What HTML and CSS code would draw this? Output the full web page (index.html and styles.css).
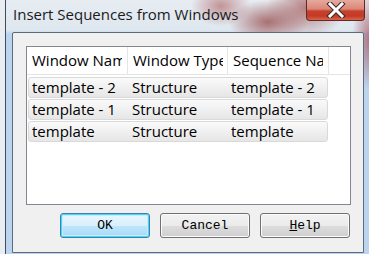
FILE: index.html
```html
<!DOCTYPE html>
<html>
<head>
<meta charset="utf-8">
<link rel="stylesheet" href="styles.css">
</head>
<body>
<div class="win">
  <div class="titlebar">
    <span class="title">Insert Sequences from Windows</span>
    <div class="close">
      <svg width="20" height="16" viewBox="0 0 20 16">
        <path d="M4 2 L16 14 M16 2 L4 14" stroke="#3a2a2a" stroke-width="5" stroke-linecap="square" fill="none"/>
        <path d="M4 2 L16 14 M16 2 L4 14" stroke="#ffffff" stroke-width="3" stroke-linecap="square" fill="none"/>
      </svg>
    </div>
  </div>
  <div class="client">
    <div class="list">
      <div class="hdr">
        <div class="hc c1"><span class="ht">Window Name</span></div>
        <div class="hc c2"><span class="ht">Window Type</span></div>
        <div class="hc c3"><span class="ht">Sequence Name</span></div>
        <div class="hfill"></div>
      </div>
      <div class="row"><div class="c c1">template - 2</div><div class="c c2">Structure</div><div class="c c3">template - 2</div></div>
      <div class="row"><div class="c c1">template - 1</div><div class="c c2">Structure</div><div class="c c3">template - 1</div></div>
      <div class="row"><div class="c c1">template</div><div class="c c2">Structure</div><div class="c c3">template</div></div>
    </div>
    <div class="buttons">
      <button class="btn def">OK</button>
      <button class="btn">Cancel</button>
      <button class="btn"><u>H</u>elp</button>
    </div>
  </div>
</div>
</body>
</html>
```

FILE: styles.css
```css
html, body {
  margin: 0;
  padding: 0;
}
body {
  width: 369px;
  height: 254px;
  overflow: hidden;
  background: #e9edf1;
  font-family: "Open Sans", "Noto Sans", sans-serif;
}
.win {
  margin-left: 5px;
  height: 254px;
  border-left: 1px solid #3d4c5c;
  padding-left: 6px;
  background:
    radial-gradient(ellipse 40px 22px at 262px 22px, rgba(150,70,70,0.75), rgba(150,70,70,0) 100%),
    radial-gradient(ellipse 30px 20px at 215px 6px, rgba(170,90,90,0.6), rgba(170,90,90,0) 100%),
    radial-gradient(ellipse 40px 30px at 300px 8px, rgba(160,80,80,0.7), rgba(160,80,80,0) 100%),
    radial-gradient(ellipse 18px 50px at 364px 40px, rgba(170,90,100,0.8), rgba(170,90,100,0) 100%),
    linear-gradient(to bottom, #e6ecf2 0px, #dfe7ef 30px, #bcd4ee 34px, #bcd4ee 254px);
}
.titlebar {
  height: 32px;
  display: flex;
  align-items: flex-start;
}
.title {
  margin-left: 1px;
  margin-top: 4px;
  font-size: 15px;
  color: #1a1a1a;
  white-space: nowrap;
}
.close {
  margin-left: auto;
  margin-right: 4px;
  width: 57px;
  height: 20px;
  border: 1px solid #5c2a2a;
  border-top: none;
  border-radius: 0 0 4px 4px;
  background: linear-gradient(to bottom, #e6a99c 0%, #d9877a 45%, #c8412e 55%, #c33a25 80%, #d8664e 100%);
  display: flex;
  align-items: center;
  justify-content: center;
}
.client {
  box-sizing: border-box;
  width: 352px;
  height: 221px;
  border: 1px solid #5b6b7c;
  border-radius: 2px 2px 0 0;
  background: #f0f0f0;
  padding: 13px 11px 0 13px;
}
.list {
  box-sizing: border-box;
  width: 325px;
  height: 159px;
  border: 1px solid #828790;
  background: #ffffff;
}
.hdr {
  display: flex;
  height: 27px;
  border-bottom: 1px solid #e5e5e5;
  margin-bottom: 2px;
}
.hc {
  box-sizing: border-box;
  font-size: 15px;
  line-height: 26px;
  padding-left: 5px;
  border-right: 1px solid #e5e5e5;
  color: #000;
}
.ht {
  display: block;
  width: 90px;
  white-space: nowrap;
  overflow: hidden;
}
.hdr .c1 { width: 101px; }
.hdr .c2 { width: 100px; }
.hdr .c3 { width: 101px; }
.hfill { flex: 1; }
.row {
  box-sizing: border-box;
  display: flex;
  margin-left: 1px;
  width: 300px;
  height: 21px;
  margin-bottom: 1px;
  border: 1px solid #d9d9d9;
  border-radius: 3px;
  background: linear-gradient(to bottom, #fafafa 0%, #f0f0f0 50%, #e6e6e6 100%);
}
.c {
  box-sizing: border-box;
  font-size: 15px;
  line-height: 19px;
  padding-left: 3px;
  white-space: nowrap;
  overflow: hidden;
  color: #000;
}
.row .c1 { width: 100px; }
.row .c2 { width: 99px; }
.row .c3 { width: 99px; }
.buttons {
  display: flex;
  justify-content: flex-end;
  gap: 10px;
  margin-top: 8px;
  padding-right: 2px;
}
.btn {
  box-sizing: border-box;
  width: 90px;
  height: 25px;
  border: 1px solid #707070;
  border-radius: 3px;
  background: linear-gradient(to bottom, #f2f2f2 0%, #ebebeb 50%, #dddddd 51%, #cfcfcf 100%);
  font-family: "Liberation Mono", monospace;
  font-size: 13px;
  color: #000;
  padding: 0;
  box-shadow: inset 0 0 0 1px #fcfcfc;
}
.btn.def {
  border-color: #3c7fb1;
  background: linear-gradient(to bottom, #eaf6fd 0%, #d9f0fc 50%, #bee6fd 51%, #a7d9f5 100%);
  box-shadow: inset 0 0 0 1px #48d7f4, inset 0 0 0 2px #c5ecfa;
}
```
